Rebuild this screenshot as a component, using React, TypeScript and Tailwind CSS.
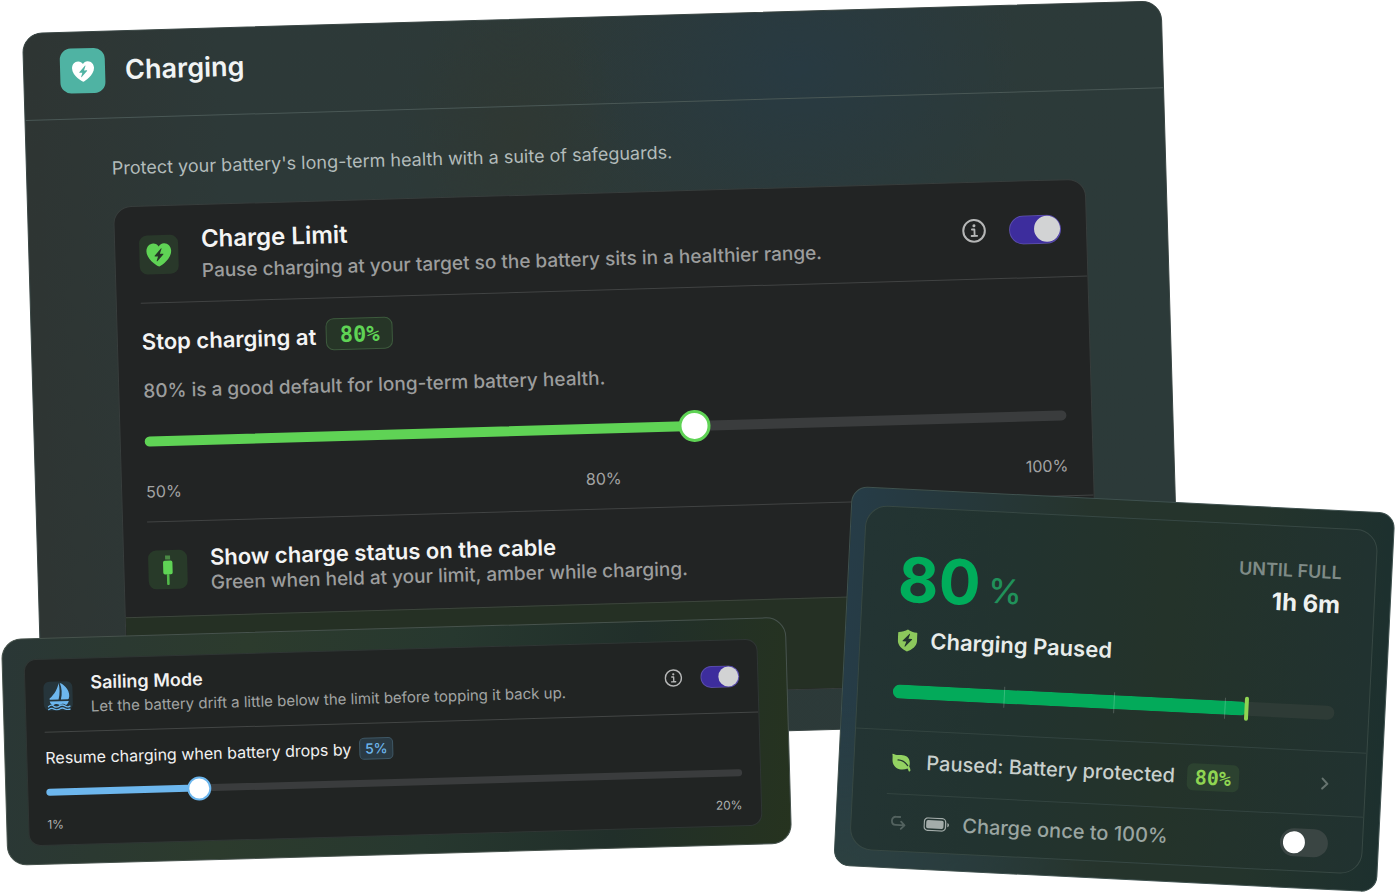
import { useState, type CSSProperties, type ReactNode } from 'react';
import { ChevronRight } from 'lucide-react';

interface SwitchProps {
  label: string;
  className: string;
  defaultChecked?: boolean;
}

function Switch({ label, className, defaultChecked = false }: SwitchProps) {
  return (
    <input
      type="checkbox"
      role="switch"
      aria-label={label}
      defaultChecked={defaultChecked}
      className={`appearance-none shrink-0 rounded-full cursor-pointer flex items-center justify-start checked:justify-end before:content-[''] before:block before:rounded-full ${className}`}
    />
  );
}

const bigSwitch =
  'w-[52px] h-[29px] bg-[#414846] checked:bg-[#3d2d9d] border border-white/15 before:size-[26px] before:bg-[#d2d3d4]';
const smallSwitch =
  'w-[39px] h-[22px] bg-[#414846] checked:bg-[#3d2d9d] border border-white/15 before:size-[20px] before:bg-[#d2d3d4]';
const greySwitch = 'w-12 h-7 px-[3px] bg-[#3a4543] checked:bg-[#00ab5c] before:size-[22px] before:bg-white';

interface RangeProps {
  label: string;
  min: number;
  max: number;
  initial: number;
  color: string;
  className: string;
}

function Range({ label, min, max, initial, color, className }: RangeProps) {
  const [value, setValue] = useState(initial);
  const fill = ((value - min) / (max - min)) * 100;

  return (
    <input
      type="range"
      aria-label={label}
      min={min}
      max={max}
      value={value}
      onChange={(e) => setValue(Number(e.target.value))}
      style={{ '--track': `linear-gradient(to right, ${color} ${fill}%, #3a3c3d ${fill}%)` } as CSSProperties}
      className={`block w-full appearance-none bg-transparent cursor-pointer [&::-webkit-slider-runnable-track]:rounded-full [&::-webkit-slider-runnable-track]:[background:var(--track)] [&::-webkit-slider-thumb]:appearance-none [&::-webkit-slider-thumb]:rounded-full [&::-webkit-slider-thumb]:bg-white ${className}`}
    />
  );
}

function HeartBolt({ className, bolt }: { className: string; bolt: string }) {
  return (
    <svg viewBox="0 0 24 24" className={className} aria-hidden="true">
      <path
        fill="currentColor"
        d="M12 22.6C11.3 22.6 1 16.4 1 8.9C1 4.9 3.8 2 7.2 2C9.3 2 11 3 12 4.7C13 3 14.7 2 16.8 2C20.2 2 23 4.9 23 8.9C23 16.4 12.7 22.6 12 22.6Z"
      />
      <path fill={bolt} d="M13.9 6.6L8.2 12.8C7.9 13.2 8.1 13.5 8.5 13.5H11.2L9.9 17.4C9.8 17.9 10.1 18 10.5 17.7L15.9 11.9C16.2 11.5 16 11.2 15.6 11.2H12.9L14.4 7C14.6 6.5 14.3 6.2 13.9 6.6Z" />
    </svg>
  );
}

function InfoIcon({ className }: { className: string }) {
  return (
    <svg viewBox="0 0 24 24" className={className} fill="none" stroke="currentColor" aria-hidden="true">
      <circle cx="12" cy="12" r="10.8" strokeWidth="2" />
      <path d="M9.9 10.6H12.4V17M9.4 17.1H15" strokeWidth="1.8" strokeLinecap="round" strokeLinejoin="round" />
      <circle cx="12" cy="7" r="1.5" fill="currentColor" stroke="none" />
    </svg>
  );
}

function CableIcon() {
  return (
    <svg viewBox="0 0 39 39" className="size-[39px]" aria-hidden="true">
      <rect x="17" y="5.5" width="5" height="4" fill="#4a8a45" />
      <rect x="14.8" y="10.5" width="9.4" height="13.8" rx="1.8" fill="#5fd355" />
      <rect x="18.3" y="24" width="2.6" height="11" rx="1" fill="#52b94a" />
    </svg>
  );
}

function SailIcon() {
  return (
    <svg viewBox="0 0 88 88" className="size-[29px]" aria-hidden="true">
      <path fill="#6db7ee" d="M46 5C44 20 33 40 18 51C17 53 18 55 20 55L45 55C50 38 50 20 46 5Z" />
      <path fill="#6db7ee" d="M50 5C66 10 84 34 76 53C75 55 74 55 72 55L52 55C57 38 56 20 50 5Z" />
      <path fill="#6db7ee" d="M18 60H76C74 66 71 70 67 72C60 67 56 67 48 72C40 67 36 67 28 72C23 70 19 66 18 60Z" />
      <path
        d="M14 76C21 70 26 70 31 76C37 79 41 79 47 75C53 70 58 71 64 75C69 79 74 79 79 76M14 85C21 80 26 80 31 84C37 87 41 87 47 84C53 80 58 80 64 84C69 87 74 87 79 85"
        fill="none"
        stroke="#6db7ee"
        strokeWidth="4"
        strokeLinecap="round"
      />
    </svg>
  );
}

function ShieldBolt() {
  return (
    <svg viewBox="0 0 20 23" className="w-5 h-[23px]" aria-hidden="true">
      <path fill="#8cc75c" d="M10 .5C12.4 2.2 16 3.2 19 3.4C19.4 3.4 19.6 3.7 19.6 4.1V11.5C19.6 17 14.8 20.4 10 22.6C5.2 20.4 .4 17 .4 11.5V4.1C.4 3.7 .6 3.4 1 3.4C4 3.2 7.6 2.2 10 .5Z" />
      <path fill="#22342e" d="M11.6 4.9L5.3 11.9C5 12.3 5.2 12.6 5.6 12.6H9L7.4 17.3C7.3 17.9 7.7 18.1 8.1 17.7L14.5 10.6C14.8 10.2 14.6 9.9 14.2 9.9H10.9L12.3 5.3C12.4 4.7 12 4.5 11.6 4.9Z" />
    </svg>
  );
}

function LeafIcon() {
  return (
    <svg viewBox="0 0 20 18" className="w-5 h-[18px]" aria-hidden="true">
      <path fill="#93d262" d="M.6 .9C.3 .6 .8 .2 1.2 .4C4.5 2.2 8.5 .8 12.5 1.5C16.5 2.3 18.4 5.4 18.4 9.4C18.4 10.8 18.2 11.8 18 12.4C18.9 13.5 19.3 14.9 19.4 16.3C19.3 17.6 17.9 17.8 17.5 16.6C17.2 15.7 16.9 15 16.4 14.4C11 17.2 3.6 15.6 1.5 9.6C.5 6.5 1.3 3.6 .6 .9Z" />
      <path d="M6.5 6.3C10 6.3 14 8.3 16.4 11.6" fill="none" stroke="#22342e" strokeWidth="1.2" strokeLinecap="round" />
    </svg>
  );
}

function TurnIcon() {
  return (
    <svg viewBox="0 0 16 16" className="size-4 text-[#53625f]" fill="none" stroke="currentColor" strokeWidth="1.8" strokeLinecap="round" strokeLinejoin="round" aria-hidden="true">
      <path d="M9.5 2.2H5.4C3 2.2 1.4 3.8 1.4 6.2C1.4 8.8 3 10.4 5.4 10.4H14M10.6 6.8L14.2 10.4L10.6 14" />
    </svg>
  );
}

function BatteryIcon() {
  return (
    <svg viewBox="0 0 26 14" className="w-[26px] h-[14px] text-[#a3acaa]" aria-hidden="true">
      <rect x=".8" y=".8" width="21.4" height="12.4" rx="3.6" fill="none" stroke="currentColor" strokeWidth="1.3" />
      <rect x="2.8" y="2.8" width="17.4" height="8.4" rx="1.8" fill="currentColor" />
      <path d="M24 4.8C25 5.2 25.6 6 25.6 7C25.6 8 25 8.800 24 9.2Z" fill="currentColor" />
    </svg>
  );
}

function Pill({ className, children }: { className: string; children: ReactNode }) {
  return <span className={`inline-flex items-center justify-center ${className}`}>{children}</span>;
}

function ChargingPanel() {
  return (
    <section className="w-[83%] origin-top-left rotate-[-1.64deg] rounded-[20px] border border-[#3a4644] pb-10 overflow-hidden bg-[#2c3837] bg-[radial-gradient(ellipse_20%_24%_at_68%_8%,#283a42_0%,#283a4200_100%),radial-gradient(ellipse_10%_22%_at_43%_16%,#2f3833_0%,#2f383300_100%),linear-gradient(to_right,#2e3533_0%,#2d3938_18%,#2c3a39_100%)]">
      <header className="flex items-center gap-5 pl-9 pt-4 pb-[25px] border-b border-[#4a5856]">
        <span className="size-[45px] rounded-[11px] bg-[#4fb3a3] flex items-center justify-center">
          <HeartBolt className="size-6 text-white" bolt="#4fb3a3" />
        </span>
        <h1 className="text-[27px] leading-8 font-semibold text-[#f1f4f4]">Charging</h1>
      </header>

      <div className="pl-[85px] pr-20 pt-[38px]">
        <p className="text-[18px] leading-6 text-[#b3bcbb]">
          Protect your battery's long-term health with a suite of safeguards.
        </p>

        <div className="mt-[26px] rounded-t-[18px] border border-[#373d3c] overflow-hidden bg-[#222424]">
          <div className="flex items-center gap-[23px] pl-6 pr-[25px] py-[14px]">
            <span className="size-[39px] shrink-0 rounded-lg bg-[#29382a] flex items-center justify-center">
              <HeartBolt className="size-[27px] text-[#5fd355]" bolt="#263527" />
            </span>
            <div className="flex-1 pt-1">
              <h2 className="text-2xl leading-8 font-semibold text-[#f4f4f4]">Charge Limit</h2>
              <p className="text-[19px] leading-8 font-medium text-[#9c9d9d]">
                Pause charging at your target so the battery sits in a healthier range.
              </p>
            </div>
            <button type="button" aria-label="About Charge Limit" className="cursor-pointer text-[#b6b7b7]">
              <InfoIcon className="size-6" />
            </button>
            <Switch label="Charge Limit" className={bigSwitch} defaultChecked />
          </div>

          <div className="ml-6 h-px bg-[#414343]" />

          <div className="pl-6 pr-[25px] pt-5 pb-5">
            <div className="flex items-center gap-[10px]">
              <h3 className="pt-1 text-[22px] leading-7 font-semibold text-[#f4f4f4]">Stop charging at</h3>
              <Pill className="h-8 w-[67px] rounded-lg border border-[#3d5a3d] bg-[#263527] font-['DejaVu_Sans_Mono',monospace] text-[22px] font-bold text-[#5fd355]">80%</Pill>
            </div>
            <p className="mt-[22px] text-[19px] leading-7 font-medium text-[#9c9d9d]">
              80% is a good default for long-term battery health.
            </p>
            <Range
              label="Stop charging at"
              min={50}
              max={100}
              initial={80}
              color="#5fd355"
              className="mt-5 h-8 [&::-webkit-slider-runnable-track]:h-[10px] [&::-webkit-slider-thumb]:size-8 [&::-webkit-slider-thumb]:-mt-[11px] [&::-webkit-slider-thumb]:border-[3px] [&::-webkit-slider-thumb]:border-[#5fd355]"
            />
            <div className="mt-6 flex justify-between text-base leading-5 text-[#a2a3a3]">
              <span>50%</span>
              <span>80%</span>
              <span>100%</span>
            </div>
          </div>

          <div className="ml-6 h-px bg-[#414343]" />

          <div className="flex items-center gap-[23px] pl-6 pr-[25px] py-[19px]">
            <span className="size-[39px] shrink-0 rounded-lg bg-[#283a29]">
              <CableIcon />
            </span>
            <div className="pt-1">
              <h2 className="text-[22px] leading-[26px] font-semibold text-[#f4f4f4]">Show charge status on the cable</h2>
              <p className="text-[19px] leading-[26px] font-medium text-[#9c9d9d]">Green when held at your limit, amber while charging.</p>
            </div>
          </div>

          <div className="h-[91px] border-t border-[#3d453d] bg-[#253024]" />
        </div>
      </div>
    </section>
  );
}

function SailingPanel() {
  return (
    <section className="absolute left-px top-[639px] w-[56.2%] origin-top-left rotate-[-1.62deg] rounded-[20px] border border-[#47534d] pl-[21px] pr-7 pt-5 pb-[18px] bg-[#2a3630] bg-[linear-gradient(100deg,#2a3736_0%,#2b3931_15%,#2c3b2d_30%,#27382f_55%,#212f2a_78%,#26331f_100%)]">
      <div className="rounded-xl border border-[#2f3634] overflow-hidden bg-[#212423]">
        <div className="flex items-center gap-[18px] px-[18px] py-3">
          <span className="size-[29px] shrink-0 rounded-md bg-[#26353b] flex items-center justify-center">
            <SailIcon />
          </span>
          <div className="flex-1">
            <h2 className="text-[18px] leading-6 font-semibold text-[#f1f1f1]">Sailing Mode</h2>
            <p className="text-[15px] leading-6 text-[#a2a4a3]">
              Let the battery drift a little below the limit before topping it back up.
            </p>
          </div>
          <button type="button" aria-label="About Sailing Mode" className="cursor-pointer text-[#b6b7b7]">
            <InfoIcon className="size-[18px]" />
          </button>
          <Switch label="Sailing Mode" className={smallSwitch} defaultChecked />
        </div>

        <div className="ml-[18px] h-px bg-[#434645]" />

        <div className="px-[18px] pt-[14px] pb-3">
          <div className="flex items-center gap-2">
            <h3 className="text-base leading-[22px] text-[#f1f1f1]">Resume charging when battery drops by</h3>
            <Pill className="h-[22px] w-[34px] rounded-[5px] border border-[#3f5866] bg-[#2a3a43] text-sm font-medium text-[#6db7ee]">5%</Pill>
          </div>
          <Range
            label="Resume charging when battery drops by"
            min={1}
            max={20}
            initial={5}
            color="#6db7ee"
            className="mt-[11px] h-6 [&::-webkit-slider-runnable-track]:h-[7px] [&::-webkit-slider-thumb]:size-6 [&::-webkit-slider-thumb]:-mt-2 [&::-webkit-slider-thumb]:border-2 [&::-webkit-slider-thumb]:border-[#6db7ee]"
          />
          <div className="mt-[13px] flex justify-between text-xs leading-4 text-[#b0b2b1]">
            <span>1%</span>
            <span>20%</span>
          </div>
        </div>
      </div>
    </section>
  );
}

function StatusPanel() {
  return (
    <section className="absolute left-[61%] top-[486px] w-[39%] origin-top-left rotate-[2.83deg] rounded-2xl border border-[#3f514f] pl-[14px] pr-[15px] pt-[17px] pb-4 bg-[#25342e] bg-[radial-gradient(ellipse_50%_45%_at_0%_100%,#2c4040_0%,#2c404000_100%),linear-gradient(to_right,#263c47_0%,#26393f_14%,#26342c_45%,#24342c_75%,#1d302e_100%)]">
      <div className="rounded-[22px] border border-[#374844] overflow-hidden bg-[#23332d] bg-[linear-gradient(to_right,#233433_0%,#22332f_30%,#24332a_60%,#213230_100%)]">
        <div className="pl-[35px] pr-[34px] pt-8 pb-[26px]">
          <div className="flex justify-between">
            <div className="mt-[10px] flex items-end gap-2 text-[#00ad5b]">
              <span className="text-[62px] leading-[60px] font-bold">80</span>
              <span className="text-[34px] leading-[46px] font-medium text-[#20915a]">%</span>
            </div>
            <div className="text-right">
              <div className="text-[18px] leading-6 font-semibold text-[#7f8b87]">UNTIL FULL</div>
              <div className="mt-1 text-2xl leading-8 font-bold text-[#eef1f0]">1h 6m</div>
            </div>
          </div>

          <div className="mt-4 flex items-center gap-[11px]">
            <span className="w-6 flex justify-center">
              <ShieldBolt />
            </span>
            <span className="text-[22px] leading-7 font-semibold text-[#e8ecea]">Charging Paused</span>
          </div>

          <div
            role="meter"
            aria-label="Battery level"
            aria-valuemin={0}
            aria-valuemax={100}
            aria-valuenow={80}
            className="relative mt-[26px] h-6 flex items-center"
          >
            <div className="h-[14px] w-full rounded-full bg-[#2e3b36] overflow-hidden">
              <div className="h-full w-4/5 bg-[#03aa5a] rounded-r-md" />
            </div>
            <span className="absolute left-1/4 h-[21px] w-px bg-white/20" />
            <span className="absolute left-1/2 h-[21px] w-px bg-white/20" />
            <span className="absolute left-3/4 h-[21px] w-px bg-white/20" />
            <span className="absolute left-4/5 h-6 w-1 -translate-x-1/2 rounded-full bg-[#8fd552]" />
          </div>
        </div>

        <button type="button" className="w-full flex items-center border-t border-[#334440] pl-[35px] pr-[34px] py-[18px] cursor-pointer">
          <span className="w-6 flex justify-center">
            <LeafIcon />
          </span>
          <span className="ml-[13px] text-[20px] leading-[27px] font-medium text-[#c9d0cd]">Paused: Battery protected</span>
          <Pill className="ml-3 h-[27px] w-[52px] rounded-md bg-[#2c4230] font-['DejaVu_Sans_Mono',monospace] text-[20px] font-bold text-[#8fd552]">80%</Pill>
          <ChevronRight className="ml-auto -mr-1 size-5 text-[#66736f]" strokeWidth={2.5} />
        </button>

        <div className="ml-[34px] h-px bg-[#334440]" />

        <div className="flex items-center gap-[13px] pl-[35px] pr-[34px] py-[14px]">
          <span className="w-6 flex justify-center">
            <TurnIcon />
          </span>
          <BatteryIcon />
          <span className="flex-1 text-[20px] leading-7 font-medium text-[#9aa5a1]">Charge once to 100%</span>
          <Switch label="Charge once to 100%" className={greySwitch} />
        </div>
      </div>
    </section>
  );
}

export default function App() {
  return (
    <main className="relative min-h-screen overflow-hidden bg-white pl-[22px] pt-[33px] font-['Inter','Liberation_Sans',sans-serif]">
      <ChargingPanel />
      <SailingPanel />
      <StatusPanel />
    </main>
  );
}
